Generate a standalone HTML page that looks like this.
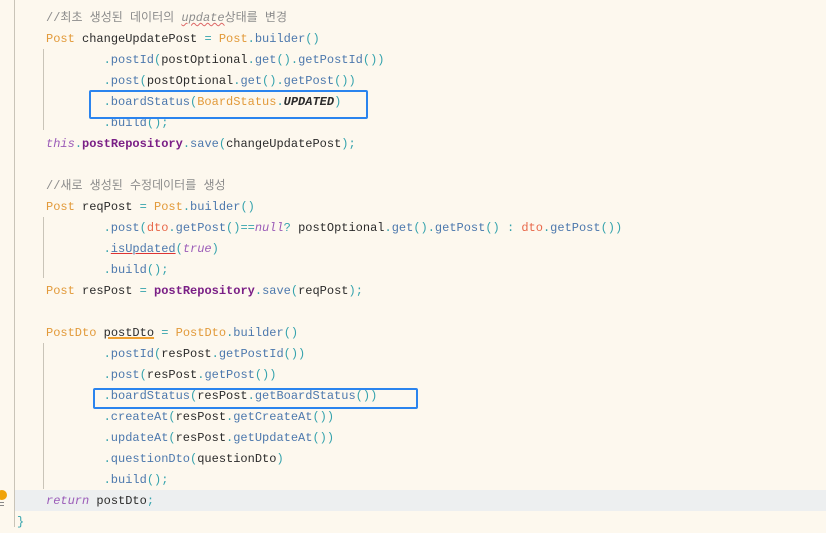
<!DOCTYPE html>
<html><head><meta charset="utf-8"><style>
html,body{margin:0;padding:0}
body{width:826px;height:527px;background:#fdf8ee;position:relative;overflow:hidden;font-family:"Liberation Mono","Noto Sans CJK KR",monospace;font-size:12px}
.l{position:absolute;left:46px;height:21px;line-height:21px;white-space:pre;color:#2b2b2b;margin-top:2px}
.i{left:103.6px}
.t{color:#e29a3a}
.m{color:#4c78ad}
.p{color:#35a3ad}
.c{color:#8c8c8c;font-family:"Liberation Mono","Noto Sans CJK KR",monospace}
.b{color:#7a1f86;font-weight:bold}
.k{color:#9b5cb8;font-style:italic}
.r{color:#e8684a}
.box{position:absolute;border:2.5px solid #2b84ee;border-radius:2px;box-sizing:border-box}
.vl{position:absolute;width:1px;background:#c9c4b8}
</style></head><body>
<div style="position:absolute;left:14px;top:490px;width:812px;height:21px;background:#edeff0"></div>
<div class="vl" style="left:14px;top:0;height:527px"></div>
<div class="vl" style="left:43px;top:49px;height:81px"></div>
<div class="vl" style="left:43px;top:217px;height:61px"></div>
<div class="vl" style="left:43px;top:343px;height:146px"></div>
<div style="position:absolute;left:-3px;top:490px;width:10px;height:10px;border-radius:50%;background:#f0a30a"></div>
<div style="position:absolute;left:0;top:502px;width:4px;height:1px;background:#888"></div>
<div style="position:absolute;left:0;top:505px;width:4px;height:1px;background:#888"></div>

<div class="l c" style="top:6px">//최초 생성된 데이터의 <i style="text-decoration:underline wavy;text-decoration-color:#d66;text-decoration-thickness:1px">update</i>상태를 변경</div>
<div class="l" style="top:27px"><span class="t">Post</span> changeUpdatePost <span class="p">=</span> <span class="t">Post</span><span class="p">.</span><span class="m">builder</span><span class="p">()</span></div>
<div class="l i" style="top:48px"><span class="p">.</span><span class="m">postId</span><span class="p">(</span>postOptional<span class="p">.</span><span class="m">get</span><span class="p">().</span><span class="m">getPostId</span><span class="p">())</span></div>
<div class="l i" style="top:69px"><span class="p">.</span><span class="m">post</span><span class="p">(</span>postOptional<span class="p">.</span><span class="m">get</span><span class="p">().</span><span class="m">getPost</span><span class="p">())</span></div>
<div class="l i" style="top:90px"><span class="p">.</span><span class="m">boardStatus</span><span class="p">(</span><span class="t">BoardStatus</span><span class="p">.</span><b><i>UPDATED</i></b><span class="p">)</span></div>
<div class="l i" style="top:111px"><span class="p">.</span><span class="m">build</span><span class="p">();</span></div>
<div class="l" style="top:132px"><span class="k">this</span><span class="p">.</span><span class="b">postRepository</span><span class="p">.</span><span class="m">save</span><span class="p">(</span>changeUpdatePost<span class="p">);</span></div>

<div class="l c" style="top:174px">//새로 생성된 수정데이터를 생성</div>
<div class="l" style="top:195px"><span class="t">Post</span> reqPost <span class="p">=</span> <span class="t">Post</span><span class="p">.</span><span class="m">builder</span><span class="p">()</span></div>
<div class="l i" style="top:216px"><span class="p">.</span><span class="m">post</span><span class="p">(</span><span class="r">dto</span><span class="p">.</span><span class="m">getPost</span><span class="p">()==</span><span class="k">null</span><span class="p">?</span> postOptional<span class="p">.</span><span class="m">get</span><span class="p">().</span><span class="m">getPost</span><span class="p">()</span> <span class="p">:</span> <span class="r">dto</span><span class="p">.</span><span class="m">getPost</span><span class="p">())</span></div>
<div class="l i" style="top:237px"><span class="p">.</span><span class="m" style="text-decoration:underline;text-decoration-color:#d33">isUpdated</span><span class="p">(</span><span class="k">true</span><span class="p">)</span></div>
<div class="l i" style="top:258px"><span class="p">.</span><span class="m">build</span><span class="p">();</span></div>
<div class="l" style="top:279px"><span class="t">Post</span> resPost <span class="p">=</span> <span class="b">postRepository</span><span class="p">.</span><span class="m">save</span><span class="p">(</span>reqPost<span class="p">);</span></div>

<div class="l" style="top:321px"><span class="t">PostDto</span> <span style="text-decoration:underline;text-decoration-color:#f0a030;text-decoration-thickness:2px">postDto</span> <span class="p">=</span> <span class="t">PostDto</span><span class="p">.</span><span class="m">builder</span><span class="p">()</span></div>
<div class="l i" style="top:342px"><span class="p">.</span><span class="m">postId</span><span class="p">(</span>resPost<span class="p">.</span><span class="m">getPostId</span><span class="p">())</span></div>
<div class="l i" style="top:363px"><span class="p">.</span><span class="m">post</span><span class="p">(</span>resPost<span class="p">.</span><span class="m">getPost</span><span class="p">())</span></div>
<div class="l i" style="top:384px"><span class="p">.</span><span class="m">boardStatus</span><span class="p">(</span>resPost<span class="p">.</span><span class="m">getBoardStatus</span><span class="p">())</span></div>
<div class="l i" style="top:405px"><span class="p">.</span><span class="m">createAt</span><span class="p">(</span>resPost<span class="p">.</span><span class="m">getCreateAt</span><span class="p">())</span></div>
<div class="l i" style="top:426px"><span class="p">.</span><span class="m">updateAt</span><span class="p">(</span>resPost<span class="p">.</span><span class="m">getUpdateAt</span><span class="p">())</span></div>
<div class="l i" style="top:447px"><span class="p">.</span><span class="m">questionDto</span><span class="p">(</span>questionDto<span class="p">)</span></div>
<div class="l i" style="top:468px"><span class="p">.</span><span class="m">build</span><span class="p">();</span></div>
<div class="l" style="top:489px"><span class="k">return</span> postDto<span class="p">;</span></div>
<div class="l" style="top:510px;left:17px"><span class="p">}</span></div>

<div class="box" style="left:89px;top:90px;width:279px;height:29px"></div>
<div class="box" style="left:93px;top:388px;width:325px;height:21px"></div>
</body></html>
